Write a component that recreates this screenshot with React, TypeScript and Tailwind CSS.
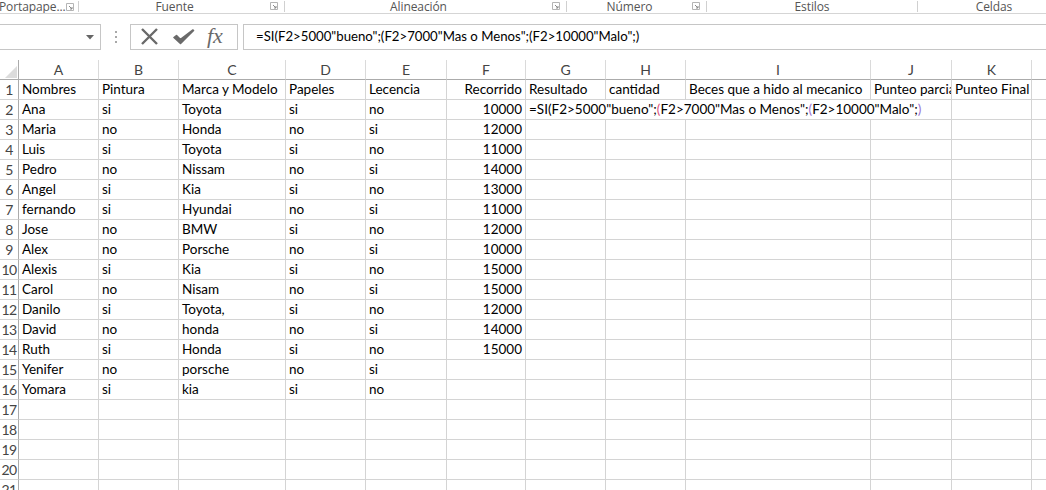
import React from 'react';

const widths = ['w-[80px]', 'w-[80px]', 'w-[107px]', 'w-[80px]', 'w-[81px]', 'w-[79px]', 'w-[80px]', 'w-[80px]', 'w-[185px]', 'w-[81px]', 'w-[80px]'];
const letters = ['A', 'B', 'C', 'D', 'E', 'F', 'G', 'H', 'I', 'J', 'K'];

const rows: string[][] = [
  ['Nombres', 'Pintura', 'Marca y Modelo', 'Papeles', 'Lecencia', 'Recorrido', 'Resultado', 'cantidad', 'Beces que a hido al mecanico', 'Punteo parcial', 'Punteo Final'],
  ['Ana', 'si', 'Toyota', 'si', 'no', '10000'],
  ['Maria', 'no', 'Honda', 'no', 'si', '12000'],
  ['Luis', 'si', 'Toyota', 'si', 'no', '11000'],
  ['Pedro', 'no', 'Nissam', 'no', 'si', '14000'],
  ['Angel', 'si', 'Kia', 'si', 'no', '13000'],
  ['fernando', 'si', 'Hyundai', 'no', 'si', '11000'],
  ['Jose', 'no', 'BMW', 'si', 'no', '12000'],
  ['Alex', 'no', 'Porsche', 'no', 'si', '10000'],
  ['Alexis', 'si', 'Kia', 'si', 'no', '15000'],
  ['Carol', 'no', 'Nisam', 'no', 'si', '15000'],
  ['Danilo', 'si', 'Toyota,', 'si', 'no', '12000'],
  ['David', 'no', 'honda', 'no', 'si', '14000'],
  ['Ruth', 'si', 'Honda', 'si', 'no', '15000'],
  ['Yenifer', 'no', 'porsche', 'no', 'si'],
  ['Yomara', 'si', 'kia', 'si', 'no'],
  [], [], [], [], [],
];

const cell = 'shrink-0 h-5 border-r border-b border-[#d4d4d4] px-[3px] overflow-hidden whitespace-nowrap leading-[19px]';

function Formula({ colored }: { colored?: boolean }) {
  return (
    <>
      =SI(F2&gt;5000"bueno";<span className={colored ? 'text-[#e2527a]' : ''}>(</span>F2&gt;7000"Mas o Menos";
      <span className={colored ? 'text-[#9c74d4]' : ''}>(</span>F2&gt;10000"Malo";
      <span className={colored ? 'text-[#9c74d4]' : ''}>)</span>
    </>
  );
}

function Launcher() {
  return (
    <svg width="8" height="8" viewBox="0 0 8 8" className="shrink-0">
      <path d="M0.5 0.5H7.5V7.5H0.5Z" fill="none" stroke="#b5b5b5" />
      <path d="M3 3L6 6M4 6H6V4" fill="none" stroke="#8a8a8a" />
    </svg>
  );
}

function Group({ label, w, launcher = true }: { label: string; w: string; launcher?: boolean }) {
  return (
    <div className={`${w} shrink-0 flex items-center h-full`}>
      <div className="flex-1 text-center">{label}</div>
      {launcher && <div className="mr-[6px] -mt-[1px]"><Launcher /></div>}
      <div className="w-px h-[11px] bg-[#d0d0d0]" />
    </div>
  );
}

export default function App() {
  return (
    <div className="w-[1046px] h-[490px] bg-white overflow-hidden text-black" style={{ fontFamily: 'Lato, "Open Sans", sans-serif' }}>
      {/* ribbon group labels */}
      <div className="h-[14px] border-b border-[#d5d5d5] flex text-[12px] text-[#555] leading-[12px] overflow-hidden -tracking-[0.1px]" style={{ fontFamily: '"Open Sans", sans-serif' }}>
        <div className="w-[79px] shrink-0 flex items-center h-full">
          <div className="-ml-[1px] flex-1">Portapape...</div>
          <div className="mr-[4px]"><Launcher /></div>
          <div className="w-px h-[11px] bg-[#d0d0d0]" />
        </div>
        <Group label="Fuente" w="w-[206px]" />
        <Group label="Alineación" w="w-[282px]" />
        <Group label="Número" w="w-[140px]" />
        <Group label="Estilos" w="w-[211px]" launcher={false} />
        <div className="w-[152px] shrink-0 text-center flex items-center justify-center">Celdas</div>
      </div>

      {/* formula bar */}
      <div className="mt-[10px] h-[26px] flex items-stretch">
        <div className="w-[101px] shrink-0 border border-l-0 border-[#c6c6c6] flex items-center justify-end pr-[6px]">
          <svg width="8" height="5" viewBox="0 0 8 5"><path d="M0 0H8L4 4.5Z" fill="#666" /></svg>
        </div>
        <div className="w-[29px] shrink-0 flex flex-col items-center justify-center gap-[3px]">
          <div className="w-[2px] h-[2px] bg-[#a8a8a8]" />
          <div className="w-[2px] h-[2px] bg-[#a8a8a8]" />
          <div className="w-[2px] h-[2px] bg-[#a8a8a8]" />
        </div>
        <div className="w-[108px] shrink-0 border border-[#c6c6c6] flex items-center">
          <svg width="20" height="18" viewBox="0 0 20 18" className="ml-[9px]">
            <path d="M2 1L17 16M17 1L2 16" stroke="#6a6a6a" strokeWidth="2.4" />
          </svg>
          <svg width="22" height="18" viewBox="0 0 22 18" className="ml-[13px]">
            <path d="M1 9.5L7.5 15.5L20.5 2.5L20 2L7.5 11.5L3.5 7.5Z" fill="#6a6a6a" stroke="#6a6a6a" strokeWidth="1.6" strokeLinejoin="round" />
          </svg>
          <span className="ml-[12px] text-[22px] italic text-[#6a6a6a] leading-none -mt-[3px]" style={{ fontFamily: '"Liberation Serif", serif' }}>fx</span>
        </div>
        <div className="ml-[5px] flex-1 border border-r-0 border-[#c6c6c6] flex items-center pl-[12px] text-[13.2px] whitespace-nowrap">
          <Formula />
        </div>
      </div>

      {/* grid */}
      <div className="mt-[10px] text-[13.5px]">
        <div className="flex h-5">
          <div className="w-[19px] shrink-0 h-5 border-r border-b border-[#ababab] relative">
            <svg width="12" height="12" viewBox="0 0 12 12" className="absolute right-[1px] bottom-[1px]">
              <path d="M12 0V12H0Z" fill="#dcdcdc" />
            </svg>
          </div>
          {letters.map((l, i) => (
            <div key={l} className={`${widths[i]} shrink-0 h-5 border-r border-[#dadada] border-b border-b-[#ababab] text-center text-[14px] leading-[19px] text-[#444]`}>
              {l}
            </div>
          ))}
          <div className="flex-1 h-5 border-b border-[#ababab]" />
        </div>
        {rows.map((r, ri) => (
          <div key={ri} className="flex h-5">
            <div className="w-[19px] shrink-0 h-5 border-r border-r-[#ababab] border-b border-[#d4d4d4] text-center text-[14px] leading-[19px] text-[#444] -tracking-[0.5px]">
              {ri + 1}
            </div>
            {ri === 1 ? (
              <>
                {widths.slice(0, 6).map((w, ci) => (
                  <div key={ci} className={`${w} ${cell} ${ci === 5 ? 'text-right' : ''}`}>{r[ci] ?? ''}</div>
                ))}
                <div className={`w-[426px] ${cell}`}>
                  <Formula colored />
                </div>
                <div className={`${widths[10]} ${cell}`} />
              </>
            ) : (
              widths.map((w, ci) => (
                <div key={ci} className={`${w} ${cell} ${ci === 5 ? 'text-right' : ''}`}>{r[ci] ?? ''}</div>
              ))
            )}
            <div className="flex-1 h-5 border-b border-[#d4d4d4]" />
          </div>
        ))}
      </div>
    </div>
  );
}
